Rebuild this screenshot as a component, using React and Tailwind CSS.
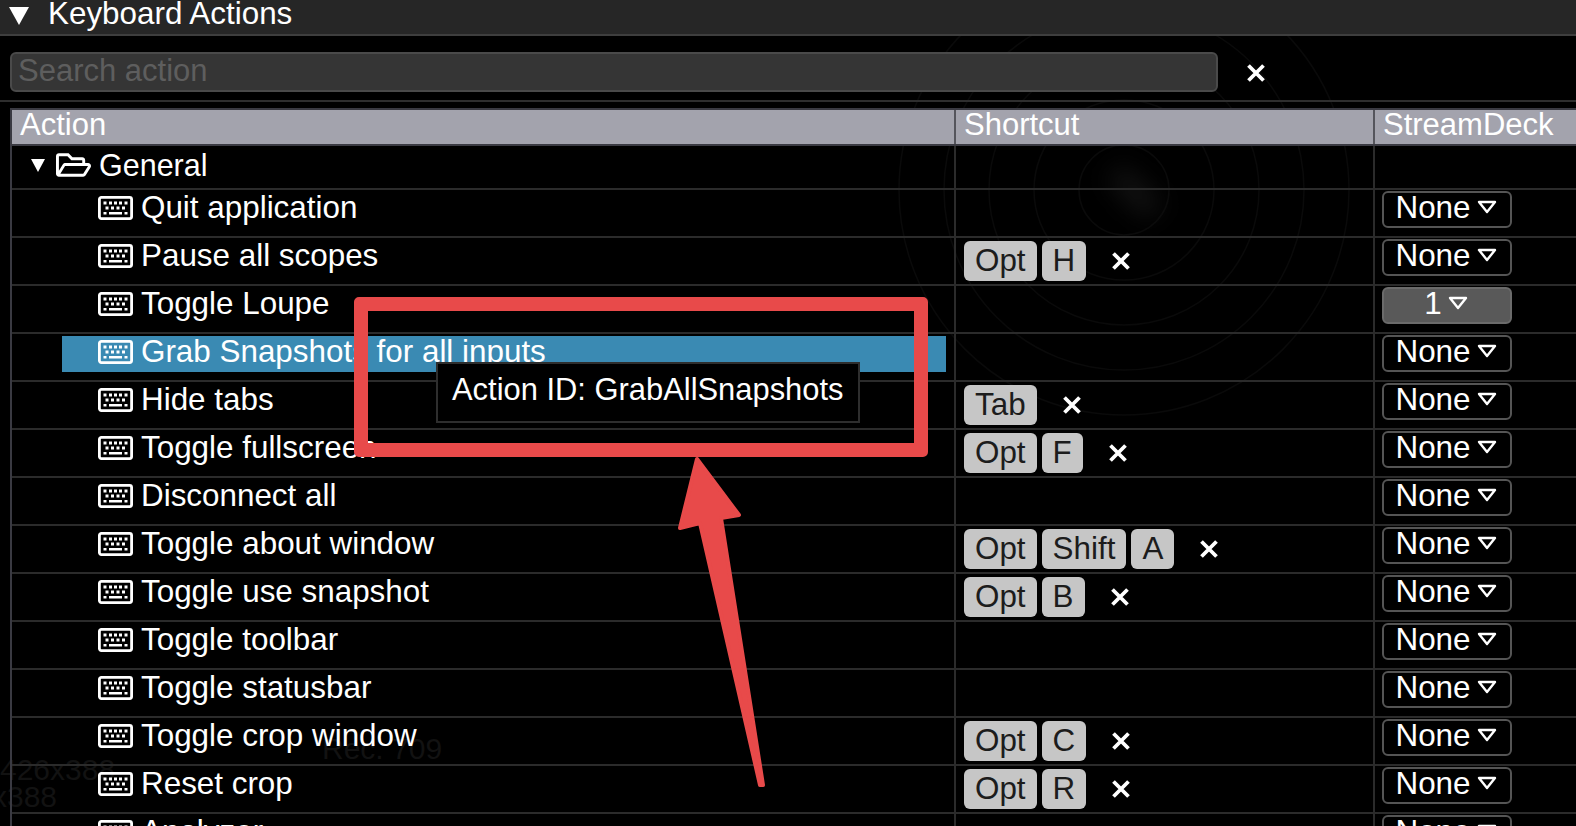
import { FaRegFolderOpen } from "react-icons/fa";

const rows = [
  { name: "Quit application" },
  { name: "Pause all scopes", keys: ["Opt", "H"] },
  { name: "Toggle Loupe", deck: "1" },
  { name: "Grab Snapshots for all inputs", selected: true },
  { name: "Hide tabs", keys: ["Tab"] },
  { name: "Toggle fullscreen", keys: ["Opt", "F"] },
  { name: "Disconnect all" },
  { name: "Toggle about window", keys: ["Opt", "Shift", "A"] },
  { name: "Toggle use snapshot", keys: ["Opt", "B"] },
  { name: "Toggle toolbar" },
  { name: "Toggle statusbar" },
  { name: "Toggle crop window", keys: ["Opt", "C"] },
  { name: "Reset crop", keys: ["Opt", "R"] },
  { name: "Analyzer" },
];

function KeyboardIcon() {
  return (
    <svg width="35" height="24" viewBox="0 0 35 24" className="shrink-0" fill="none">
      <rect x="1.4" y="1.4" width="32.2" height="21.2" rx="2" stroke="white" strokeWidth="2.8" />
      <g stroke="white" strokeWidth="2.8">
        <path d="M5.5 7h3M11 7h3M16 7h3M21 7h3M26.5 7h3" />
        <path d="M7.5 12h3M13 12h3M18.5 12h3M24 12h3" />
        <path d="M5.5 17.2h3M11 17.2h13M26.5 17.2h3" strokeWidth="2.4" />
      </g>
    </svg>
  );
}

function CloseX() {
  return (
    <svg width="20" height="20" viewBox="0 0 20 20" className="shrink-0">
      <path d="M2.5 2.5l15 15M17.5 2.5l-15 15" stroke="white" strokeWidth="3.8" />
    </svg>
  );
}

function KeyChips({ keys }) {
  if (!keys) return null;
  return (
    <div className="flex items-center">
      <div className="flex gap-[5px]">
        {keys.map((k) => (
          <span key={k} className="h-10 px-[11px] flex items-center rounded-md bg-[#c6c6c6] text-[#1c1c1c] leading-none">
            {k}
          </span>
        ))}
      </div>
      <span className="ml-[25px]">
        <CloseX />
      </span>
    </div>
  );
}

function DeckSelect({ value }) {
  const active = value !== "None";
  return (
    <div className={`w-[130px] h-[37px] rounded-md border-2 flex items-center justify-center gap-[6px] leading-none pb-[3px] pr-[2px] ${active ? "bg-[#595959] border-[#6b6b6b]" : "bg-black border-[#555]"}`}>
      <span>{value}</span>
      <svg width="20" height="14" viewBox="0 0 20 14" fill="none" className="-mt-[3px]">
        <path d="M2 2h16l-8 10z" stroke="white" strokeWidth="2.4" strokeLinejoin="round" />
      </svg>
    </div>
  );
}

function ActionRow({ row }) {
  return (
    <div className="flex h-12 border-b-2 border-[#2b2b2b]">
      <div className="w-[942px] pl-[50px] pr-[8px] pt-[2px]">
        <div className={`flex items-start h-9 pl-[36px] ${row.selected ? "bg-[#3a8ab3]" : ""}`}>
          <div className="flex items-center gap-[8px] h-9 leading-none pb-[4px] whitespace-nowrap">
            <KeyboardIcon />
            <span>{row.name}</span>
          </div>
        </div>
      </div>
      <div className="w-[419px] border-l-2 border-[#2b2b2b] pl-2 flex items-center">
        <KeyChips keys={row.keys} />
      </div>
      <div className="flex-1 border-l-2 border-[#2b2b2b] pl-[7px] pt-[1px]">
        <DeckSelect value={row.deck || "None"} />
      </div>
    </div>
  );
}

export default function App() {
  return (
    <div className="relative w-[1576px] h-[826px] overflow-hidden bg-black text-white text-[31.4px] font-['Liberation_Sans',Arial,sans-serif]">
      {/* faint scope image behind the panel */}
      <svg className="absolute left-[824px] top-[0px]" width="600" height="600" viewBox="0 0 600 600" fill="none" stroke="#0a0a0a" strokeWidth="1.5">
        <circle cx="300" cy="190" r="45" />
        <circle cx="300" cy="190" r="90" />
        <circle cx="300" cy="190" r="135" />
        <circle cx="300" cy="190" r="180" />
        <circle cx="300" cy="190" r="225" />
      </svg>
      <div className="absolute left-[1105px] top-[180px] w-[60px] h-[24px] bg-[#121212] rotate-45 blur-md rounded-full" />
      <div className="absolute left-0 top-[756px] text-[#121212] leading-[27px] text-[30px]">
        <div>426x388</div>
        <div className="-ml-2">x388</div>
      </div>
      <div className="absolute left-[322px] top-[726px] text-[#121212] text-[30px]">Rec. 709</div>

      <div className="relative">
        <div className="h-[36px] bg-[#262626] border-b-2 border-[#3e3e3e] flex items-center pb-[6px]">
          <svg width="20" height="18" viewBox="0 0 20 18" className="ml-[9px] mt-1">
            <path d="M0 0h20L10 18z" fill="white" />
          </svg>
          <span className="ml-[19px] leading-none">Keyboard Actions</span>
        </div>

        <div className="flex items-center h-[66px] pl-[10px] border-b-2 border-[#2e2e2e]">
          <div className="w-[1208px] h-[40px] mt-[7px] rounded-md border-2 border-[#4a4a4a] bg-[#353535] text-[#5e5e5e] text-[31px] flex items-center pl-[6px] pb-[2px] leading-none">
            Search action
          </div>
          <span className="ml-[28px] mt-[9px]">
            <CloseX />
          </span>
        </div>

        <div className="mt-[6px] ml-[10px] border-l-2 border-t-2 border-[#3a3a42]">
          <div className="flex h-[36px] bg-[#a3a3ad] border-b-2 border-[#3a3a42] leading-none text-[31px]">
            <div className="w-[942px] pl-2 pb-[5px] flex items-center">Action</div>
            <div className="w-[419px] border-l-2 border-[#55555c] pl-2 pb-[5px] flex items-center">Shortcut</div>
            <div className="flex-1 border-l-2 border-[#55555c] pl-2 pb-[5px] flex items-center">StreamDeck</div>
          </div>

          <div className="flex h-[44px] border-b-2 border-[#2b2b2b]">
            <div className="w-[942px] flex items-center pl-[19px] pb-[4px] leading-none">
              <svg width="14" height="13" viewBox="0 0 14 13">
                <path d="M0 0h14L7 13z" fill="white" />
              </svg>
              <FaRegFolderOpen className="ml-[11px] w-[35px] h-[32px]" />
              <span className="ml-[8px] text-[30.5px]">General</span>
            </div>
            <div className="w-[419px] border-l-2 border-[#2b2b2b]" />
            <div className="flex-1 border-l-2 border-[#2b2b2b]" />
          </div>

          {rows.map((row) => (
            <ActionRow key={row.name} row={row} />
          ))}
        </div>
      </div>

      {/* tooltip */}
      <div className="absolute left-[436px] top-[362px] w-[424px] h-[61px] bg-black border-2 border-[#2e2e2e] pl-[14px] pt-[8px] leading-[36px] text-[30.9px] whitespace-nowrap">
        Action ID: GrabAllSnapshots
      </div>

      {/* red annotation */}
      <div className="absolute left-[354px] top-[297px] w-[574px] h-[160px] rounded-[5px] border-[14px] border-[#e84a4a]" />
      <svg className="absolute left-[670px] top-[450px]" width="100" height="345" viewBox="0 0 100 345">
        <path d="M27 9 L69 65 L51 68 L93 335 L90 335 L30 73 L10 78 Z" fill="#e84a4a" stroke="#e84a4a" strokeWidth="4" strokeLinejoin="round" />
      </svg>
    </div>
  );
}
